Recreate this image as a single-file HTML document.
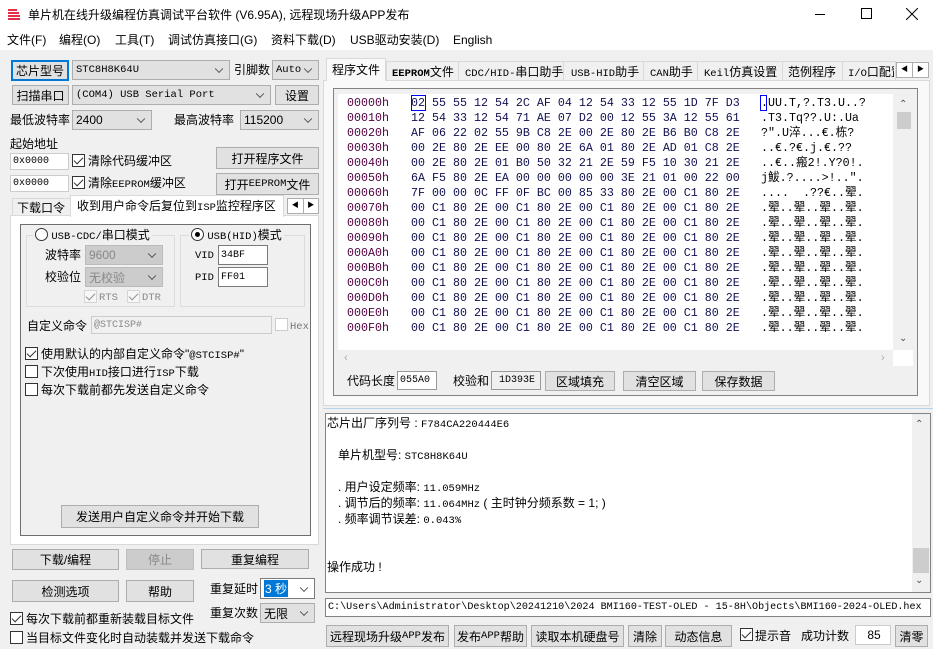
<!DOCTYPE html>
<html><head><meta charset="utf-8">
<style>
*{box-sizing:border-box;margin:0;padding:0}
body{width:933px;height:649px;overflow:hidden;background:#f0f0f0;font-family:"Liberation Sans","Noto Sans CJK SC",sans-serif;font-size:12px;color:#000;position:relative}
.a{position:absolute;white-space:nowrap;line-height:14px}
.b{position:absolute;background:#e1e1e1;border:1px solid #adadad;text-align:center;font-size:12px;display:flex;align-items:center;justify-content:center;white-space:nowrap}
.in{position:absolute;background:#fff;border:1px solid #7a7a7a;font-family:"Liberation Mono",monospace;font-size:10px;padding-left:2px;display:flex;align-items:center;white-space:nowrap;overflow:hidden}
.cb{position:absolute;background:#e1e1e1;border:1px solid #adadad;font-size:12px;padding-left:3px;display:flex;align-items:center;white-space:nowrap}
.cb:after{content:"";position:absolute;right:7px;top:50%;width:5px;height:5px;border-right:1px solid #555;border-bottom:1px solid #555;transform:translateY(-70%) rotate(45deg)}
.mono{font-family:"Liberation Mono","Noto Sans CJK SC",monospace;font-size:10.5px}
.chk{position:absolute;width:13px;height:13px;border:1px solid #333;background:#fff}
.chk.on:after{content:"";position:absolute;left:3px;top:0px;width:4px;height:8px;border-right:1.5px solid #333;border-bottom:1.5px solid #333;transform:rotate(45deg)}
.hx{position:absolute;font-family:"Liberation Mono",monospace;font-size:11.67px;white-space:pre;color:#101050}
.ad{color:#500040}
</style></head><body>
<div class="a" style="left:0;top:0;width:933px;height:50px;background:#fff"></div>
<svg class="a" style="left:7px;top:6px" width="16" height="16" viewBox="0 0 16 16"><path d="M1 4h9M1 7h11M1 10h12M1 13h12" stroke="#e0304a" stroke-width="2"/></svg>
<div class="a" style="left:28px;top:8px;font-size:12px">单片机在线升级编程仿真调试平台软件 (V6.95A), 远程现场升级APP发布</div>
<div class="a" style="left:815px;top:14px;width:10px;height:1px;background:#000"></div>
<div class="a" style="left:861px;top:8px;width:11px;height:11px;border:1px solid #000"></div>
<svg class="a" style="left:906px;top:8px" width="12" height="12"><path d="M0 0L12 12M12 0L0 12" stroke="#000"/></svg>
<div class="a" style="left:7px;top:33px">文件(F)</div>
<div class="a" style="left:59px;top:33px">编程(O)</div>
<div class="a" style="left:115px;top:33px">工具(T)</div>
<div class="a" style="left:168px;top:33px">调试仿真接口(G)</div>
<div class="a" style="left:271px;top:33px">资料下载(D)</div>
<div class="a" style="left:350px;top:33px">USB驱动安装(D)</div>
<div class="a" style="left:453px;top:33px">English</div>

<div class="b" style="left:11px;top:60px;width:58px;height:21px;border:2px solid #0078d7">芯片型号</div>
<div class="cb mono" style="left:72px;top:60px;width:158px;height:20px">STC8H8K64U</div>
<div class="a" style="left:234px;top:63px">引脚数</div>
<div class="cb mono" style="left:272px;top:60px;width:47px;height:20px">Auto</div>
<div class="b" style="left:12px;top:85px;width:57px;height:20px">扫描串口</div>
<div class="cb mono" style="left:72px;top:85px;width:199px;height:20px">(COM4) USB Serial Port</div>
<div class="b" style="left:275px;top:85px;width:44px;height:20px">设置</div>
<div class="a" style="left:10px;top:113px">最低波特率</div>
<div class="cb" style="left:72px;top:110px;width:80px;height:20px">2400</div>
<div class="a" style="left:174px;top:113px">最高波特率</div>
<div class="cb" style="left:240px;top:110px;width:79px;height:20px">115200</div>
<div class="a" style="left:10px;top:137px">起始地址</div>
<div class="in" style="left:10px;top:153px;width:59px;height:17px;border-color:#ccc">0x0000</div>
<div class="chk on" style="left:72px;top:154px"></div>
<div class="a" style="left:88px;top:154px">清除代码缓冲区</div>
<div class="b" style="left:216px;top:147px;width:103px;height:22px">打开程序文件</div>
<div class="in" style="left:10px;top:175px;width:59px;height:17px;border-color:#ccc">0x0000</div>
<div class="chk on" style="left:72px;top:176px"></div>
<div class="a" style="left:88px;top:176px">清除<span class="mono">EEPROM</span>缓冲区</div>
<div class="b" style="left:216px;top:173px;width:103px;height:22px">打开<span class="mono">EEPROM</span>文件</div>

<div class="a" style="left:12px;top:198px;width:59px;height:18px;border:1px solid #d9d9d9;background:#f0f0f0"></div>
<div class="a" style="left:17px;top:201px">下载口令</div>
<div class="a" style="left:10px;top:215px;width:309px;height:330px;border:1px solid #d9d9d9;background:#fff"></div>
<div class="a" style="left:70px;top:195px;width:214px;height:22px;border:1px solid #d9d9d9;border-bottom:none;background:#fff"></div>
<div class="a" style="left:77px;top:199px">收到用户命令后复位到<span class="mono">ISP</span>监控程序区</div>
<div class="a" style="left:287px;top:198px;width:32px;height:16px;border:1px solid #adadad;background:#fff;font-size:7px;display:flex"><span style="flex:1;text-align:center;line-height:14px;border-right:1px solid #adadad">◀</span><span style="flex:1;text-align:center;line-height:14px">▶</span></div>
<div class="a" style="left:20px;top:224px;width:291px;height:312px;border:1px solid #6d6d6d;background:#f0f0f0"></div>
<div class="a" style="left:26px;top:235px;width:149px;height:72px;border:1px solid #dcdcdc"></div>
<div class="a" style="left:180px;top:235px;width:125px;height:72px;border:1px solid #dcdcdc"></div>
<div class="a" style="left:33px;top:228px;background:#f0f0f0;padding:0 2px"><span style="display:inline-block;width:13px;height:13px;border:1px solid #333;border-radius:50%;background:#fff;vertical-align:-2px"></span> <span class="mono">USB-CDC/</span>串口模式</div>
<div class="a" style="left:189px;top:228px;background:#f0f0f0;padding:0 2px"><span style="display:inline-block;width:13px;height:13px;border:1px solid #333;border-radius:50%;background:#fff;vertical-align:-2px;position:relative"><span style="position:absolute;left:3px;top:3px;width:5px;height:5px;border-radius:50%;background:#000"></span></span> <span class="mono">USB(HID)</span>模式</div>
<div class="a" style="left:45px;top:248px">波特率</div>
<div class="cb" style="left:85px;top:245px;width:78px;height:20px;background:#ccc;border-color:#bbb;color:#888">9600</div>
<div class="a" style="left:45px;top:270px">校验位</div>
<div class="cb" style="left:85px;top:267px;width:78px;height:20px;background:#ccc;border-color:#bbb;color:#888">无校验</div>
<div class="chk on" style="left:84px;top:290px;border-color:#bbb;opacity:.5"></div>
<div class="a mono" style="left:99px;top:291px;color:#888">RTS</div>
<div class="chk on" style="left:127px;top:290px;border-color:#bbb;opacity:.5"></div>
<div class="a mono" style="left:142px;top:291px;color:#888">DTR</div>
<div class="a mono" style="left:195px;top:249px">VID</div>
<div class="in" style="left:218px;top:245px;width:50px;height:20px">34BF</div>
<div class="a mono" style="left:195px;top:271px">PID</div>
<div class="in" style="left:218px;top:267px;width:50px;height:20px">FF01</div>
<div class="a" style="left:27px;top:319px">自定义命令</div>
<div class="in" style="left:91px;top:316px;width:181px;height:18px;background:#f0f0f0;border-color:#ccc;color:#888">@STCISP#</div>
<div class="chk" style="left:275px;top:318px;border-color:#ccc"></div>
<div class="a mono" style="left:290px;top:320px;color:#777">Hex</div>
<div class="chk on" style="left:25px;top:347px"></div>
<div class="a" style="left:41px;top:347px">使用默认的内部自定义命令"<span class="mono">@STCISP#</span>"</div>
<div class="chk" style="left:25px;top:365px"></div>
<div class="a" style="left:41px;top:365px">下次使用<span class="mono">HID</span>接口进行<span class="mono">ISP</span>下载</div>
<div class="chk" style="left:25px;top:383px"></div>
<div class="a" style="left:41px;top:383px">每次下载前都先发送自定义命令</div>
<div class="b" style="left:61px;top:505px;width:198px;height:23px">发送用户自定义命令并开始下载</div>

<div class="b" style="left:12px;top:549px;width:107px;height:21px">下载/编程</div>
<div class="b" style="left:126px;top:549px;width:68px;height:21px;background:#ccc;border-color:#bfbfbf;color:#888">停止</div>
<div class="b" style="left:201px;top:549px;width:108px;height:20px">重复编程</div>
<div class="b" style="left:12px;top:580px;width:107px;height:22px">检测选项</div>
<div class="b" style="left:126px;top:580px;width:68px;height:22px">帮助</div>
<div class="a" style="left:210px;top:582px">重复延时</div>
<div class="cb" style="left:260px;top:578px;width:55px;height:21px;background:#fff;border-color:#7a7a7a"><span style="background:#0078d7;color:#fff;padding:0 1px">3 秒</span></div>
<div class="a" style="left:210px;top:606px">重复次数</div>
<div class="cb" style="left:260px;top:603px;width:55px;height:20px">无限</div>
<div class="chk on" style="left:10px;top:612px"></div>
<div class="a" style="left:26px;top:612px">每次下载前都重新装载目标文件</div>
<div class="chk" style="left:10px;top:631px"></div>
<div class="a" style="left:26px;top:631px">当目标文件变化时自动装载并发送下载命令</div>

<div class="a" style="left:323px;top:80px;width:607px;height:326px;border:1px solid #d9d9d9;background:#f9f9f9"></div>
<div class="a" style="left:386px;top:61px;width:510px;height:20px;border:1px solid #d9d9d9;background:#f0f0f0"></div>
<div class="a" style="left:458px;top:61px;width:1px;height:20px;background:#d9d9d9"></div>
<div class="a" style="left:563px;top:61px;width:1px;height:20px;background:#d9d9d9"></div>
<div class="a" style="left:643px;top:61px;width:1px;height:20px;background:#d9d9d9"></div>
<div class="a" style="left:697px;top:61px;width:1px;height:20px;background:#d9d9d9"></div>
<div class="a" style="left:782px;top:61px;width:1px;height:20px;background:#d9d9d9"></div>
<div class="a" style="left:842px;top:61px;width:1px;height:20px;background:#d9d9d9"></div>
<div class="a" style="left:326px;top:58px;width:60px;height:23px;border:1px solid #d9d9d9;border-bottom:none;background:#f9f9f9"></div>
<div class="a" style="left:332px;top:63px">程序文件</div>
<div class="a" style="left:392px;top:65px"><span class="mono" style="font-weight:bold">EEPROM</span>文件</div>
<div class="a" style="left:465px;top:65px"><span class="mono">CDC/HID-</span>串口助手</div>
<div class="a" style="left:571px;top:65px"><span class="mono">USB-HID</span>助手</div>
<div class="a" style="left:650px;top:65px"><span class="mono">CAN</span>助手</div>
<div class="a" style="left:704px;top:65px"><span class="mono">Keil</span>仿真设置</div>
<div class="a" style="left:788px;top:65px">范例程序</div>
<div class="a" style="left:848px;top:65px;width:46px;overflow:hidden"><span class="mono">I/O</span>口配置</div>
<div class="a" style="left:896px;top:62px;width:33px;height:16px;border:1px solid #adadad;background:#fff;font-size:7px;display:flex"><span style="flex:1;text-align:center;line-height:14px;border-right:1px solid #adadad">◀</span><span style="flex:1;text-align:center;line-height:14px">▶</span></div>
<div class="a" style="left:333px;top:88px;width:585px;height:308px;border:1px solid #828282;background:#f0f0f0"></div>
<div class="a" style="left:338px;top:94px;width:575px;height:272px;background:#fff"></div>
<div class="a" style="left:893px;top:94px;width:20px;height:256px;background:#f0f0f0"></div>
<div class="a" style="left:897px;top:112px;width:14px;height:17px;background:#cdcdcd"></div>
<div class="a" style="left:899px;top:98px;font-size:10px;color:#555">⌃</div>
<div class="a" style="left:899px;top:332px;font-size:10px;color:#555">⌄</div>
<div class="a" style="left:338px;top:350px;width:555px;height:16px;background:#f0f0f0"></div>
<div class="a" style="left:344px;top:351px;font-size:11px;color:#aaa">‹</div>
<div class="a" style="left:881px;top:351px;font-size:11px;color:#aaa">›</div>
<div class="a" style="left:411px;top:95px;width:15px;height:16px;border:1px solid #0000ff"></div>
<div class="a" style="left:760px;top:95px;width:7px;height:16px;border:1px solid #0000ff"></div>

<div class="hx ad" style="left:347px;top:96px;line-height:15px">00000h
00010h
00020h
00030h
00040h
00050h
00060h
00070h
00080h
00090h
000A0h
000B0h
000C0h
000D0h
000E0h
000F0h</div>
<div class="hx" style="left:411px;top:96px;line-height:15px">02 55 55 12 54 2C AF 04 12 54 33 12 55 1D 7F D3
12 54 33 12 54 71 AE 07 D2 00 12 55 3A 12 55 61
AF 06 22 02 55 9B C8 2E 00 2E 80 2E B6 B0 C8 2E
00 2E 80 2E EE 00 80 2E 6A 01 80 2E AD 01 C8 2E
00 2E 80 2E 01 B0 50 32 21 2E 59 F5 10 30 21 2E
6A F5 80 2E EA 00 00 00 00 00 3E 21 01 00 22 00
7F 00 00 0C FF 0F BC 00 85 33 80 2E 00 C1 80 2E
00 C1 80 2E 00 C1 80 2E 00 C1 80 2E 00 C1 80 2E
00 C1 80 2E 00 C1 80 2E 00 C1 80 2E 00 C1 80 2E
00 C1 80 2E 00 C1 80 2E 00 C1 80 2E 00 C1 80 2E
00 C1 80 2E 00 C1 80 2E 00 C1 80 2E 00 C1 80 2E
00 C1 80 2E 00 C1 80 2E 00 C1 80 2E 00 C1 80 2E
00 C1 80 2E 00 C1 80 2E 00 C1 80 2E 00 C1 80 2E
00 C1 80 2E 00 C1 80 2E 00 C1 80 2E 00 C1 80 2E
00 C1 80 2E 00 C1 80 2E 00 C1 80 2E 00 C1 80 2E
00 C1 80 2E 00 C1 80 2E 00 C1 80 2E 00 C1 80 2E</div>
<div class="hx" style="left:761px;top:96px;line-height:15px;color:#000;font-family:'Liberation Mono','Noto Sans CJK SC',monospace">.UU.T,?.T3.U..?
.T3.Tq??.U:.Ua
?".U淬...€.栋?
..€.?€.j.€.??
..€..瘢2!.Y?0!.
j鮁.?....>!..".
....  .??€..翚.
.翚..翚..翚..翚.
.翚..翚..翚..翚.
.翚..翚..翚..翚.
.翚..翚..翚..翚.
.翚..翚..翚..翚.
.翚..翚..翚..翚.
.翚..翚..翚..翚.
.翚..翚..翚..翚.
.翚..翚..翚..翚.</div>

<div class="a" style="left:347px;top:374px">代码长度</div>
<div class="in" style="left:397px;top:371px;width:40px;height:19px;border-color:#999">055A0</div>
<div class="a" style="left:453px;top:374px">校验和</div>
<div class="in" style="left:491px;top:371px;width:50px;height:19px;border-color:#999;background:#f0f0f0;justify-content:center">1D393E</div>
<div class="b" style="left:545px;top:371px;width:70px;height:20px">区域填充</div>
<div class="b" style="left:623px;top:371px;width:73px;height:20px">清空区域</div>
<div class="b" style="left:702px;top:371px;width:73px;height:20px">保存数据</div>

<div class="a" style="left:323px;top:408px;width:610px;height:1px;background:#b8d4ea"></div>
<div class="a" style="left:325px;top:413px;width:606px;height:180px;border:1px solid #828282;background:#fff"></div>
<div class="a" style="left:912px;top:414px;width:18px;height:178px;background:#f0f0f0"></div>
<div class="a" style="left:913px;top:548px;width:16px;height:25px;background:#cdcdcd"></div>
<div class="a" style="left:915px;top:418px;font-size:10px;color:#555">⌃</div>
<div class="a" style="left:915px;top:574px;font-size:10px;color:#555">⌄</div>
<div class="a" style="left:327px;top:416px">芯片出厂序列号 : <span class="mono">F784CA220444E6</span></div>
<div class="a" style="left:338px;top:448px">单片机型号: <span class="mono">STC8H8K64U</span></div>
<div class="a" style="left:338px;top:480px">. 用户设定频率: <span class="mono">11.059MHz</span></div>
<div class="a" style="left:338px;top:496px">. 调节后的频率: <span class="mono">11.064MHz</span> ( 主时钟分频系数 = 1; )</div>
<div class="a" style="left:338px;top:512px">. 频率调节误差: <span class="mono">0.043%</span></div>
<div class="a" style="left:327px;top:560px">操作成功 !</div>

<div class="in" style="left:325px;top:598px;width:606px;height:19px;font-size:10.1px;border-color:#828282">C:\Users\Administrator\Desktop\20241210\2024 BMI160-TEST-OLED - 15-8H\Objects\BMI160-2024-OLED.hex</div>

<div class="b" style="left:326px;top:625px;width:123px;height:22px">远程现场升级<span class="mono">APP</span>发布</div>
<div class="b" style="left:454px;top:625px;width:73px;height:22px">发布<span class="mono">APP</span>帮助</div>
<div class="b" style="left:531px;top:625px;width:93px;height:22px">读取本机硬盘号</div>
<div class="b" style="left:628px;top:625px;width:34px;height:22px">清除</div>
<div class="b" style="left:665px;top:625px;width:67px;height:22px">动态信息</div>
<div class="chk on" style="left:740px;top:628px"></div>
<div class="a" style="left:755px;top:629px">提示音</div>
<div class="a" style="left:801px;top:629px">成功计数</div>
<div class="in" style="left:855px;top:625px;width:36px;height:20px;justify-content:center;border-color:#ccc;font-family:'Liberation Sans',sans-serif;font-size:12px">85</div>
<div class="b" style="left:895px;top:625px;width:33px;height:22px">清零</div>
</body></html>
